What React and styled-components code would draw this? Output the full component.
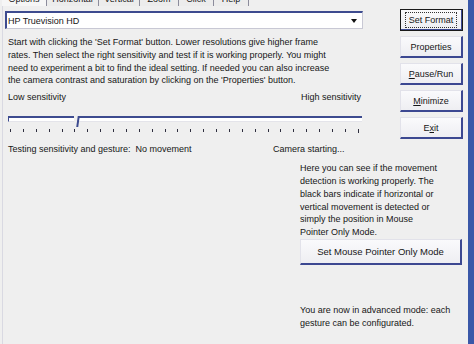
import React from 'react';
import styled, { createGlobalStyle } from 'styled-components';

const GlobalStyle = createGlobalStyle`
  html, body { margin: 0; padding: 0; background: #efefef; }
  body {
    font-family: "Liberation Sans", Arial, sans-serif;
    font-size: 9px;
    color: #161616;
  }
`;

const Window = styled.div`
  width: 474px;
  height: 344px;
  box-sizing: border-box;
  overflow: hidden;
  background: #efefef;
  padding-left: 2px;
  border-right: 6px solid #3a58a8;
  display: flex;
`;

const Page = styled.div`
  flex: 1;
  border-left: 1px solid #d9d9e2;
  padding-left: 2px;
  display: flex;
  flex-direction: column;
`;

const TabStrip = styled.div`
  display: flex;
  height: 14px;
  margin-top: -8px;
  margin-left: -3px;
`;

const Tab = styled.div`
  width: ${p => p.w}px;
  box-sizing: border-box;
  border-right: 1px solid #8c8c9c;
  text-align: center;
  line-height: 14px;
  background: ${p => (p.active ? '#f6f6f6' : '#ececec')};
`;

const Top = styled.div`
  display: grid;
  grid-template-columns: 358px 63px;
  column-gap: 37px;
`;

const Main = styled.div`
  display: flex;
  flex-direction: column;
`;

const Combo = styled.div`
  margin-top: 5px;
  height: 18px;
  box-sizing: border-box;
  background: #fff;
  border-top: 2px solid #3d4b8f;
  border-left: 2px solid #3d4b8f;
  border-right: 1px solid #c8c8d4;
  border-bottom: 1px solid #c8c8d4;
  display: flex;
  align-items: center;
  justify-content: space-between;
  padding: 0 5px 0 1px;
`;

const Text = styled.div`
  line-height: 12.8px;
  padding-left: 3px;
  margin-top: ${p => p.mt || 0}px;
`;

const Row = styled.div`
  display: flex;
  justify-content: space-between;
  line-height: 13px;
  padding: 0 2px 0 3px;
  margin-top: ${p => p.mt || 0}px;
`;

const StatusRow = styled.div`
  display: grid;
  grid-template-columns: 265px auto;
  line-height: 13px;
  padding-left: 3px;
  margin-top: 10px;
`;

const Track = styled.div`
  position: relative;
  margin: 12px 1px 0 3px;
  height: 6px;
  display: flex;
  gap: 4px;
`;

const TrackPart = styled.div`
  flex: ${p => (p.grow ? 1 : 'none')};
  width: ${p => (p.grow ? 'auto' : '66px')};
  background: #fff;
  border-top: 2px solid #3d4b8f;
  border-left: 1px solid #3d4b8f;
  border-bottom: 1px solid #e4e4ea;
  box-sizing: border-box;
`;

const Thumb = styled.div`
  position: absolute;
  left: 69px;
  top: 0;
  width: 2px;
  height: 11px;
  background: #3d4b8f;
  transform: skewX(-8deg);
`;

const Ticks = styled.div`
  display: flex;
  justify-content: space-between;
  align-items: flex-start;
  width: 349px;
  margin: 7px 0 0 5px;
`;

const Tick = styled.div`
  width: 1px;
  height: ${p => (p.big ? 4 : 3)}px;
  background: #2e2e3e;
`;

const Buttons = styled.div`
  margin-top: 3px;
  display: flex;
  flex-direction: column;
  gap: 5px;
`;

const Btn = styled.div`
  height: ${p => p.h || 22}px;
  box-sizing: border-box;
  background: linear-gradient(#fafafc, #eeeef2);
  border-top: 1px solid #e2e2ea;
  border-left: 1px solid #e2e2ea;
  border-right: 2px solid #3c4891;
  border-bottom: 2px solid #3c4891;
  display: flex;
  align-items: center;
  justify-content: center;
  font-size: ${p => p.fs || 9}px;
  outline: ${p => (p.focus ? '1px solid #1a1a1a' : 'none')};
  outline-offset: -1px;
`;

const Focus = styled.span`
  border: 1px dotted #333;
  padding: 1px 3px;
  line-height: 12px;
`;

const Key = styled.span`
  text-decoration: underline;
`;

const Panel = styled.div`
  margin-left: 295px;
  width: 162px;
  display: flex;
  flex-direction: column;
  margin-top: 6px;
`;

const PanelText = styled.div`
  line-height: 12.8px;
  margin-top: ${p => p.mt || 0}px;
`;

const tabs = [
  ['Options', 45, true],
  ['Horizontal', 52],
  ['Vertical', 41],
  ['Zoom', 39],
  ['Click', 35],
  ['Help', 35],
];

const intro = [
  "Start with clicking the 'Set Format' button. Lower resolutions give higher frame",
  'rates. Then select the right sensitivity and test if it is working properly. You might',
  'need to experiment a bit to find the ideal setting. If needed you can also increase',
  "the camera contrast and saturation by clicking on the 'Properties' button.",
];

const detection = [
  'Here you can see if the movement',
  'detection is working properly. The',
  'black bars indicate if horizontal or',
  'vertical movement is detected or',
  'simply the position in Mouse',
  'Pointer Only Mode.',
];

const lines = arr => arr.map((l, i) => <div key={i}>{l}</div>);

export default function App() {
  return (
    <>
      <GlobalStyle />
      <Window>
        <Page>
          <TabStrip>
            {tabs.map(([name, w, active]) => (
              <Tab key={name} w={w} active={active}>{name}</Tab>
            ))}
          </TabStrip>

          <Top>
            <Main>
              <Combo>
                <span>HP Truevision HD</span>
                <svg width="6" height="4" viewBox="0 0 6 4">
                  <path d="M0 0h6L3 4z" fill="#111" />
                </svg>
              </Combo>
              <Text mt={7}>{lines(intro)}</Text>
              <Row mt={4}>
                <span>Low sensitivity</span>
                <span>High sensitivity</span>
              </Row>
              <Track>
                <TrackPart />
                <TrackPart grow />
                <Thumb />
              </Track>
              <Ticks>
                {Array.from({ length: 28 }, (_, i) => (
                  <Tick key={i} big={i === 27} />
                ))}
              </Ticks>
              <StatusRow>
                <span>Testing sensitivity and gesture:&nbsp; No movement</span>
                <span>Camera starting...</span>
              </StatusRow>
            </Main>

            <Buttons>
              <Btn focus><Focus>Set Format</Focus></Btn>
              <Btn>Properties</Btn>
              <Btn><span><Key>P</Key>ause/Run</span></Btn>
              <Btn><span><Key>M</Key>inimize</span></Btn>
              <Btn><span>E<Key>x</Key>it</span></Btn>
            </Buttons>
          </Top>

          <Panel>
            <PanelText>{lines(detection)}</PanelText>
            <Btn h={26} fs={9.5}>Set Mouse Pointer Only Mode</Btn>
            <PanelText mt={39}>
              <div>You are now in advanced mode: each</div>
              <div>gesture can be configurated.</div>
            </PanelText>
          </Panel>
        </Page>
      </Window>
    </>
  );
}
